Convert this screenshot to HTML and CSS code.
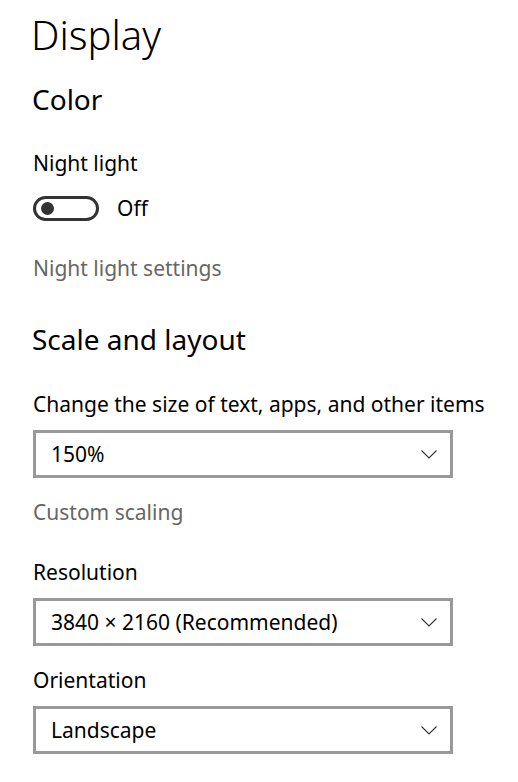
FILE: index.html
```html
<!DOCTYPE html>
<html lang="en">
<head>
<meta charset="utf-8">
<title>Display</title>
<link rel="stylesheet" href="styles.css">
</head>
<body>
<main class="page">
  <h1 class="title">Display</h1>
  <h2 class="section color">Color</h2>
  <div class="label nl-label">Night light</div>
  <div class="toggle-row">
    <span class="toggle"><span class="knob"></span></span>
    <span class="toggle-text">Off</span>
  </div>
  <a class="link nl-link">Night light settings</a>
  <h2 class="section scale">Scale and layout</h2>
  <div class="label field-label">Change the size of text, apps, and other items</div>
  <div class="select"><span>150%</span>
    <svg class="chev" width="16" height="9" viewBox="0 0 16 9"><path d="M0.5 0.5 L8 8 L15.5 0.5" fill="none" stroke="#333" stroke-width="1.1"/></svg>
  </div>
  <a class="link custom">Custom scaling</a>
  <div class="label field-label res">Resolution</div>
  <div class="select"><span>3840 × 2160 (Recommended)</span>
    <svg class="chev" width="16" height="9" viewBox="0 0 16 9"><path d="M0.5 0.5 L8 8 L15.5 0.5" fill="none" stroke="#333" stroke-width="1.1"/></svg>
  </div>
  <div class="label field-label orient">Orientation</div>
  <div class="select"><span>Landscape</span>
    <svg class="chev" width="16" height="9" viewBox="0 0 16 9"><path d="M0.5 0.5 L8 8 L15.5 0.5" fill="none" stroke="#333" stroke-width="1.1"/></svg>
  </div>
</main>
</body>
</html>
```
FILE: styles.css
```css
html, body {
  margin: 0;
  padding: 0;
  background: #fff;
}
body {
  font-family: "Noto Sans", "Open Sans", sans-serif;
  color: #000;
}
.page {
  display: flex;
  flex-direction: column;
  align-items: flex-start;
  padding: 7px 0 0 33px;
}
.title {
  margin: 0 0 0 -2px;
  font-size: 40px;
  font-weight: 300;
  line-height: 56px;
}
.section {
  margin: 0 0 0 -1px;
  font-size: 28px;
  font-weight: 400;
  line-height: 40px;
}
.section.color {
  margin-top: 16px;
}
.section.scale {
  margin-top: 37px;
}
.label, .link, .toggle-text {
  font-size: 21px;
  line-height: 28px;
}
.nl-label {
  margin-top: 30px;
}
.toggle-row {
  margin-top: 17px;
  display: flex;
  align-items: center;
  gap: 18px;
}
.toggle {
  box-sizing: border-box;
  width: 66px;
  height: 25px;
  border: 3px solid #333;
  border-radius: 13px;
  display: flex;
  align-items: center;
  padding-left: 5px;
}
.knob {
  width: 13px;
  height: 13px;
  border-radius: 50%;
  background: #333;
}
.link {
  color: #666;
}
.nl-link {
  margin-top: 32px;
}
.field-label {
  margin-top: 31px;
}
.custom {
  margin-top: 20px;
}
.res {
  margin-top: 32px;
}
.orient {
  margin-top: 20px;
}
.select {
  box-sizing: border-box;
  margin-top: 12px;
  width: 420px;
  height: 48px;
  border: 3px solid #999;
  display: flex;
  align-items: center;
  justify-content: space-between;
  padding: 0 13px 0 15px;
  font-size: 21px;
}
.chev {
  display: block;
}
```
